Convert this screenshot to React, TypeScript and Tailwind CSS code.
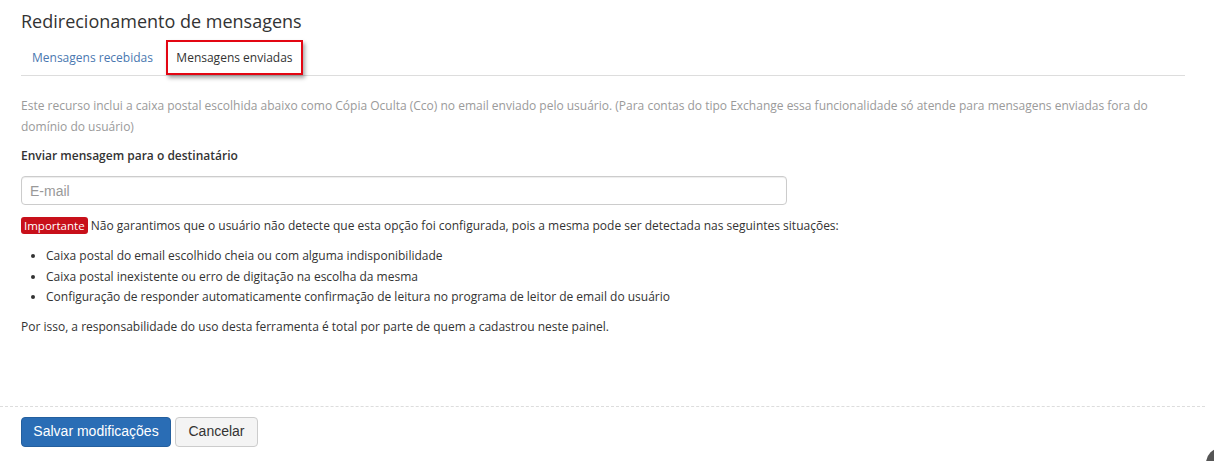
import { useState } from 'react'

const bullets = [
  'Caixa postal do email escolhido cheia ou com alguma indisponibilidade',
  'Caixa postal inexistente ou erro de digitação na escolha da mesma',
  'Configuração de responder automaticamente confirmação de leitura no programa de leitor de email do usuário',
]

export default function App() {
  const [tab, setTab] = useState<'recebidas' | 'enviadas'>('enviadas')
  const [email, setEmail] = useState('')

  return (
    <div className="relative w-[1214px] h-[461px] bg-white overflow-hidden font-['Open_Sans',sans-serif] text-[#333]">
      <div className="pl-[21px] pr-[29px] pt-[8px]">
        <h1 className="text-[18px] leading-[26px] text-[#333]">Redirecionamento de mensagens</h1>

        {/* Abas */}
        <div className="mt-[6px] flex items-end border-b border-[#ddd] h-[36px]">
          <button
            onClick={() => setTab('recebidas')}
            className={`ml-[11px] pb-[9px] text-[12px] leading-[16px] ${tab === 'recebidas' ? 'text-[#333]' : 'text-[#4a78b0]'}`}
          >
            Mensagens recebidas
          </button>
          <button
            onClick={() => setTab('enviadas')}
            className={`ml-[13px] h-[35px] w-[137px] border-2 border-[#e30613] shadow-[2px_3px_4px_rgba(0,0,0,0.35)] text-[12px] leading-[16px] font-medium ${tab === 'enviadas' ? 'text-[#333]' : 'text-[#4a78b0]'}`}
          >
            Mensagens enviadas
          </button>
        </div>

        <p className="mt-[19px] text-[12px] leading-[21px] text-[#9a9a9a]">
          Este recurso inclui a caixa postal escolhida abaixo como Cópia Oculta (Cco) no email enviado pelo usuário. (Para contas do tipo Exchange essa funcionalidade só atende para mensagens enviadas fora do domínio do usuário)
        </p>

        <label className="block mt-[10px] text-[12px] leading-[18px] font-semibold text-[#333]">
          Enviar mensagem para o destinatário
        </label>

        <input
          value={email}
          onChange={e => setEmail(e.target.value)}
          placeholder="E-mail"
          className="mt-[11px] block w-[766px] h-[29px] px-[8px] rounded-[4px] border border-[#ccc] font-['Liberation_Sans',sans-serif] text-[14px] text-[#555] placeholder:text-[#999] outline-none shadow-[inset_0_1px_1px_rgba(0,0,0,0.075)]"
        />

        <p className="mt-[12px] text-[12px] leading-[18px] text-[#333]">
          <span className="inline-block bg-[#c8101a] text-white text-[11.5px] rounded-[3px] px-[3px] leading-[17px]">Importante</span>{' '}
          Não garantimos que o usuário não detecte que esta opção foi configurada, pois a mesma pode ser detectada nas seguintes situações:
        </p>

        <ul className="mt-[11px] pl-[25px] list-disc text-[12px] leading-[20.5px] text-[#333]">
          {bullets.map(b => (
            <li key={b}>{b}</li>
          ))}
        </ul>

        <p className="mt-[9px] text-[12px] leading-[20px] text-[#333]">
          Por isso, a responsabilidade do uso desta ferramenta é total por parte de quem a cadastrou neste painel.
        </p>
      </div>

      {/* Rodapé */}
      <div className="mt-[69px] border-t border-dashed border-[#ddd] w-[1205px]">
        <div className="pl-[21px] pt-[10px] flex gap-[4px] font-['Liberation_Sans',sans-serif]">
          <button className="h-[30px] w-[150px] rounded-[4px] bg-[#2a6db5] border border-[#245f9e] text-white text-[14px]">
            Salvar modificações
          </button>
          <button className="h-[30px] w-[83px] rounded-[4px] bg-[#f4f4f4] border border-[#ccc] text-[#333] text-[14px]">
            Cancelar
          </button>
        </div>
      </div>

      <div className="absolute left-[1206px] top-[448px] w-[30px] h-[30px] rounded-full bg-[#555]" />
    </div>
  )
}
